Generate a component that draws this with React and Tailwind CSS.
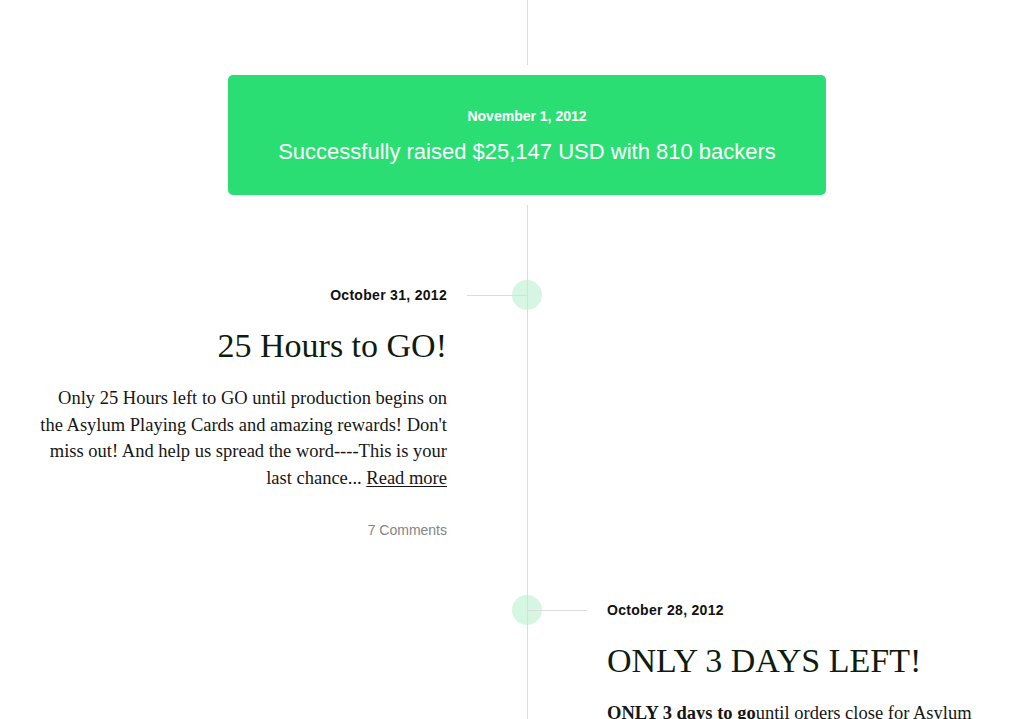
import React from 'react'

const SANS = { fontFamily: '"Liberation Sans", Arial, sans-serif' }
const SERIF = { fontFamily: '"Liberation Serif", "Times New Roman", serif' }

function Dot({ side }) {
  return (
    <div className="relative h-full w-px bg-[#dcdcdc]">
      <div className="absolute left-[-15px] top-[-5px] h-[30px] w-[30px] rounded-full bg-[#d5f6e2]">
        <div className="absolute left-[15px] top-0 h-full w-px bg-[#dcdcdc]" />
      </div>
      {side === 'left' ? (
        <div className="absolute left-[-60px] top-[10px] h-px w-[60px] bg-[#dcdcdc]" />
      ) : (
        <div className="absolute left-0 top-[10px] h-px w-[60px] bg-[#dcdcdc]" />
      )}
    </div>
  )
}

function Post({ date, title, children, comments, align }) {
  const right = align === 'right'
  return (
    <div className={right ? 'pl-[40px] pr-[80px] text-right' : 'pl-[79px] pr-[40px]'}>
      <p className="text-[14px] font-bold leading-[20px] tracking-[0.3px] text-[#111]" style={SANS}>{date}</p>
      <h2 className="mt-[21px] text-[34px] leading-[40px] text-[#0e1c0e]" style={SERIF}>{title}</h2>
      <div className="mt-[19px] text-[18.5px] leading-[26.5px] text-[#161616]" style={SERIF}>{children}</div>
      {comments && (
        <p className="mt-[29px] text-[14px] leading-[20px] text-[#828587]" style={SANS}>{comments}</p>
      )}
    </div>
  )
}

export default function App() {
  return (
    <div className="min-h-[719px] bg-white">
      {/* top line */}
      <div className="grid grid-cols-[527px_1px_1fr]">
        <div />
        <div className="h-[65px] bg-[#dcdcdc]" />
        <div />
      </div>

      {/* funded banner */}
      <div className="ml-[228px] mt-[10px] flex h-[120px] w-[598px] flex-col items-center justify-center rounded-[5px] bg-[#2bde73] text-white" style={SANS}>
        <p className="text-[14px] font-bold leading-[20px]">November 1, 2012</p>
        <p className="mt-[13px] text-[22px] leading-[26px]">Successfully raised $25,147 USD with 810 backers</p>
      </div>

      {/* timeline */}
      <div className="mt-[10px] grid grid-cols-[527px_1px_1fr] grid-rows-[80px_auto_60px_auto]">
        <div />
        <div className="bg-[#dcdcdc]" />
        <div />

        <Post
          align="right"
          date="October 31, 2012"
          title="25 Hours to GO!"
          comments="7 Comments"
        >
          Only 25 Hours left to GO until production begins on the Asylum Playing Cards and amazing rewards! Don't miss out! And help us spread the word----This is your last chance...{' '}
          <a className="underline underline-offset-2">Read more</a>
        </Post>
        <Dot side="left" />
        <div />

        <div />
        <div className="bg-[#dcdcdc]" />
        <div />

        <div />
        <Dot side="right" />
        <Post date="October 28, 2012" title="ONLY 3 DAYS LEFT!">
          <b>ONLY 3 days to go</b>until orders close for Asylum Playing Cards and the amazing rewards. Don't miss out on your chance to get a deck.
        </Post>
      </div>
    </div>
  )
}
